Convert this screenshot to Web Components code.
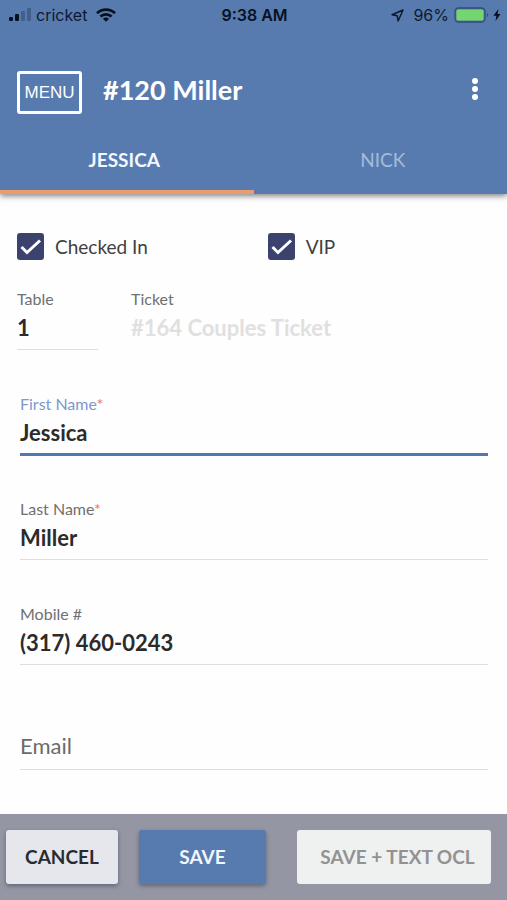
<!DOCTYPE html>
<html lang="en">
<head>
<meta charset="utf-8">
<meta name="viewport" content="width=device-width, initial-scale=1">
<title>#120 Miller</title>
<style>
  body { margin: 0; font-family: Lato, "Open Sans", sans-serif; color: #2b2b2b; --blue: #587baf; }
</style>
</head>
<body>
<guest-page></guest-page>
<script>
const define = (name, render, setup) => customElements.define(name, class extends HTMLElement {
  connectedCallback() {
    if (this.shadowRoot) return;
    this.attachShadow({ mode: 'open' }).innerHTML =
      '<style>*{box-sizing:border-box}button,input{font-family:inherit;margin:0}</style>' + render(this);
    if (setup) setup(this);
  }
});

define('status-bar', () => `
  <style>
    :host { display: grid; grid-template-columns: 1fr auto 1fr; align-items: center; height: 30px;
            padding: 0 6px 0 8px; font: 16px/20px Inter, sans-serif; color: #0d1a2e; }
    div { display: flex; align-items: center; }
    .right { justify-content: flex-end; }
    .carrier { margin: 0 9px 0 5px; }
    .pct { margin: 0 5px 0 9px; }
    time { font-weight: 600; color: #08111f; }
    svg { flex: none; display: block; }
  </style>
  <div>
    <svg width="23" height="14" viewBox="0 0 23 14" aria-hidden="true">
      <rect x="1" y="9" width="4" height="4" rx="1" fill="#07101d"/><rect x="7" y="6" width="4" height="7" rx="1" fill="#07101d"/>
      <rect x="13" y="3" width="4" height="10" rx="1" fill="#405f8d"/><rect x="19" y="0" width="4" height="13" rx="1" fill="#405f8d"/>
    </svg>
    <span class="carrier">cricket</span>
    <svg width="20" height="14" viewBox="0 0 20 14" fill="none" stroke="#07101d" stroke-width="2.7" aria-hidden="true">
      <path d="M1 5.2C6 .4 14 .4 19 5.2M4.4 8.6c3.2-3 8-3 11.2 0"/><path d="M10 13.7 6.9 10.7c1.7-1.6 4.5-1.6 6.2 0z" fill="#07101d" stroke="none"/>
    </svg>
  </div>
  <time>9:38 AM</time>
  <div class="right">
    <svg width="13" height="13" viewBox="0 0 13 13" fill="none" stroke="#0d1a2e" stroke-width="1.5" stroke-linejoin="round" aria-hidden="true">
      <path d="M12 1 1 5.7l5.2 1.1.9 5.2z"/>
    </svg>
    <span class="pct">96%</span>
    <svg width="35" height="16" viewBox="0 0 35 16" aria-hidden="true">
      <rect x="1" y="1" width="30" height="14" rx="3.5" fill="none" stroke="#304d75" stroke-width="1.3"/>
      <rect x="2.5" y="2.5" width="27" height="11" rx="2" fill="#74d66e"/>
      <path d="M33 6c1.6.5 1.6 3.5 0 4z" fill="#304d75"/>
    </svg>
    <svg style="margin-left:4px" width="8" height="12" viewBox="0 0 8 12" aria-hidden="true"><path d="M5.4 0 .4 6.8h3L2.5 12l5-7h-3z" fill="#07101d"/></svg>
  </div>`);

define('app-toolbar', () => `
  <style>
    :host { display: flex; align-items: flex-start; height: 100px; padding: 41px 17px 0; color: #fff; }
    .menu { width: 65px; height: 43px; padding: 0; border: 3px solid #fff; border-radius: 3px; background: none;
            color: #fff; font: 17px/20px "Liberation Sans", sans-serif; }
    h1 { flex: 1; margin: 0 0 0 21px; font-size: 27px; line-height: 38px; font-weight: 700; }
    .more { width: 30px; height: 36px; padding: 0; border: 0; background: none; display: grid; place-items: center; }
  </style>
  <button class="menu" type="button">MENU</button>
  <h1><slot></slot></h1>
  <button class="more" type="button" aria-label="More options">
    <svg width="6" height="24" viewBox="0 0 6 24" fill="#fff"><circle cx="3" cy="4" r="3"/><circle cx="3" cy="12" r="3"/><circle cx="3" cy="20" r="3"/></svg>
  </button>`);

define('guest-tabs', () => `
  <style>
    :host { display: grid; grid-template-columns: 1fr 1fr; }
    button { height: 64px; border: 0; border-bottom: 4px solid transparent; background: none; padding: 0 5px 0 0;
             font-size: 19px; line-height: 24px; font-weight: 400; color: #a3bddb; }
    button + button { padding: 0 0 0 5px; }
    [aria-selected=true] { font-weight: 700; color: #f3f7ff; border-color: #ea9c6c; }
  </style>
  <button type="button" role="tab" aria-selected="true">JESSICA</button><button type="button" role="tab" aria-selected="false">NICK</button>`,
  el => el.setAttribute('role', 'tablist'));

define('check-option', () => `
  <style>
    :host { display: block; }
    label { display: flex; align-items: center; gap: 11px; font-size: 19px; line-height: 27px; color: #404040; }
    .box { display: grid; width: 27px; height: 27px; }
    .box > * { grid-area: 1 / 1; }
    input { appearance: none; width: 27px; height: 27px; border-radius: 3px; border: 2px solid #3b426d; }
    input:checked { background: #3b426d; }
    svg { pointer-events: none; }
    input:not(:checked) + svg { visibility: hidden; }
  </style>
  <label><span class="box"><input type="checkbox" checked>
    <svg width="27" height="27" viewBox="0 0 27 27" fill="none" stroke="#fff" stroke-width="3"><path d="m4.5 14 5.5 5.5L23 7.5"/></svg></span>
    <span><slot></slot></span></label>`);

define('text-field', el => {
  const label = el.getAttribute('label'), value = el.getAttribute('value') || '';
  const floating = el.hasAttribute('empty');
  return `
  <style>
    :host { display: grid; grid-template-rows: 20px 42px; align-items: start; }
    label { font-size: 16px; line-height: 20px; color: #707070; white-space: nowrap; }
    i { font-style: normal; color: #ee7259; }
    input { width: 100%; min-width: 0; height: 41px; padding: 0 0 4px; border: 0; border-bottom: 1px solid #dedede; border-radius: 0;
            background: none; outline: 0; font-size: 22px; line-height: 26px; font-weight: 700; color: #2b2b2b; }
    :host([active]) label { color: #7f97cb; }
    :host([active]) input { height: 42px; padding-bottom: 2px; border-bottom: 3px solid #5279ad; }
    :host([readonly]) input { border-color: transparent; color: #e0e0e0; }
    :host([empty]) input { grid-row: 2; font-weight: 400; padding-bottom: 8px; }
    input::placeholder { color: #6b6b6b; opacity: 1; }
  </style>
  ${floating ? '' : `<label for="f">${label}${el.hasAttribute('required') ? '<i>*</i>' : ''}</label>`}
  <input id="f" type="${el.getAttribute('type') || 'text'}" value="${value}"
    ${floating ? `placeholder="${label}" aria-label="${label}"` : ''}
    ${el.hasAttribute('readonly') ? 'readonly' : ''} ${el.hasAttribute('required') ? 'required' : ''}>`;
});

define('action-button', el => `
  <style>
    :host { display: block; flex: 112 1 0; min-width: 0; }
    button { display: block; width: 100%; height: 54px; padding: 0; border: 0; border-radius: 3px; font-size: 19px; line-height: 24px;
             font-weight: 700; white-space: nowrap; background: #e5e7ed; color: #292b2f; box-shadow: 0 2px 4px rgba(40,45,65,.45); }
    :host([kind=primary]) { flex-grow: 127; }
    :host([kind=primary]) button { background: var(--blue); color: #f1f6ff; }
    :host([disabled]) { flex-grow: 194; }
    :host([disabled]) button { background: #eff0f0; color: #929292; box-shadow: none; padding-left: 7px; }
  </style>
  <button type="button" ${el.hasAttribute('disabled') ? 'disabled' : ''}><slot></slot></button>`);

define('guest-page', () => `
  <style>
    :host { display: flex; flex-direction: column; min-height: 100vh; background: #fefefe; }
    header { background: var(--blue); box-shadow: 0 2px 6px rgba(0,0,0,.5); }
    main { flex: 1; padding: 39px 17px 43px; }
    .checks { display: flex; }
    .checks > :first-child { width: 53%; }
    .seat { display: grid; grid-template-columns: 81px 1fr; gap: 33px; margin: 29px 0 43px; }
    .person { display: grid; gap: 43px; padding: 0 2px 0 3px; }
    footer { display: flex; padding: 16px 16px 16px 6px; background: #9496a3; }
    footer > :nth-child(2) { margin: 0 31px 0 21px; }
  </style>
  <header>
    <status-bar></status-bar>
    <app-toolbar>#120 Miller</app-toolbar>
    <guest-tabs></guest-tabs>
  </header>
  <main>
    <div class="checks"><check-option>Checked In</check-option><check-option>VIP</check-option></div>
    <div class="seat">
      <text-field label="Table" value="1"></text-field>
      <text-field label="Ticket" value="#164 Couples Ticket" readonly></text-field>
    </div>
    <div class="person">
      <text-field label="First Name" value="Jessica" required active></text-field>
      <text-field label="Last Name" value="Miller" required></text-field>
      <text-field label="Mobile #" value="(317) 460-0243" type="tel"></text-field>
      <text-field label="Email" type="email" empty></text-field>
    </div>
  </main>
  <footer>
    <action-button>CANCEL</action-button>
    <action-button kind="primary">SAVE</action-button>
    <action-button disabled>SAVE + TEXT OCL</action-button>
  </footer>`);
</script>
</body>
</html>
